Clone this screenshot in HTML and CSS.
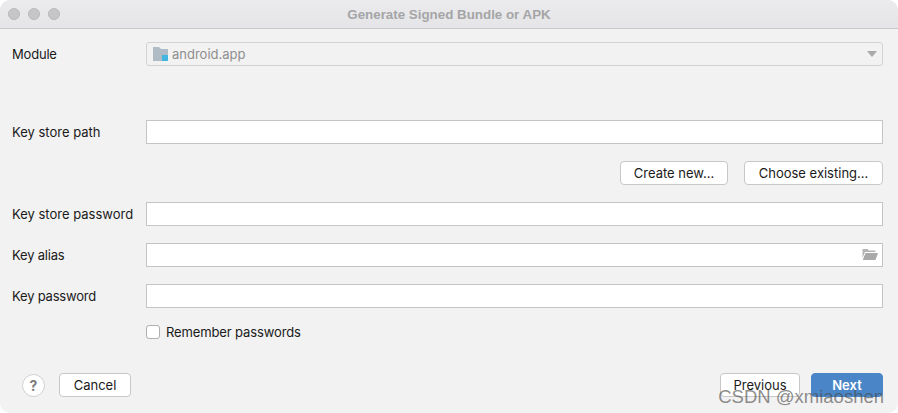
FILE: index.html
```html
<!DOCTYPE html>
<html lang="en">
<head>
<meta charset="utf-8">
<title>Generate Signed Bundle or APK</title>
<link rel="stylesheet" href="styles.css">
</head>
<body>
<div class="window">
  <header class="titlebar">
    <div class="lights"><span class="light"></span><span class="light"></span><span class="light"></span></div>
    <div class="title">Generate Signed Bundle or APK</div>
  </header>
  <main class="form">
    <div class="row row-module">
      <label class="label label-tight">Module</label>
      <div class="field field-select">
        <svg class="module-icon" width="16" height="16" viewBox="0 0 16 16"><path d="M0 1h6l2 2h7v6H9v6H0z" fill="#afbcc5"/><rect x="9" y="9" width="6" height="6" fill="#40b6e0"/></svg>
        <span class="select-text">android.app</span>
        <svg class="caret" width="10" height="6" viewBox="0 0 10 6"><path d="M0 0h10L5 6z" fill="#a9a9a9"/></svg>
      </div>
    </div>
    <div class="row row-path">
      <label class="label">Key store path</label>
      <div class="field"></div>
    </div>
    <div class="keystore-actions">
      <button class="btn btn-create">Create new...</button>
      <button class="btn btn-choose">Choose existing...</button>
    </div>
    <div class="row row-pass">
      <label class="label">Key store password</label>
      <div class="field"></div>
    </div>
    <div class="row row-gap">
      <label class="label label-tight">Key alias</label>
      <div class="field field-alias">
        <svg class="folder-icon" width="16" height="14" viewBox="0 0 16 14"><path d="M0.5 1h5l1.5 1.5h6.5V4H3L0.5 10z" fill="#b4b4b4"/><path d="M3.5 5H16l-2.5 7H0.8z" fill="#a9a9a9"/></svg>
      </div>
    </div>
    <div class="row row-gap">
      <label class="label label-tight">Key password</label>
      <div class="field"></div>
    </div>
    <div class="remember">
      <span class="checkbox"></span>
      <span class="remember-text">Remember passwords</span>
    </div>
  </main>
  <footer class="footer">
    <div class="footer-left">
      <span class="help">?</span>
      <button class="btn btn-cancel">Cancel</button>
    </div>
    <div class="footer-right">
      <button class="btn btn-prev">Previous</button>
      <button class="btn btn-next">Next</button>
    </div>
  </footer>
  <div class="watermark">CSDN @xmiaoshen</div>
</div>
</body>
</html>
```
FILE: styles.css
```css
* { box-sizing: border-box; }
html, body { margin: 0; padding: 0; background: #fff; }
body { width: 898px; height: 413px; overflow: hidden; font-family: Inter, "Liberation Sans", sans-serif; font-size: 13px; color: #1a1a1a; }
.window { position: relative; width: 898px; height: 413px; background: #f2f2f2; border-radius: 10px; overflow: hidden; display: flex; flex-direction: column; }
.titlebar { position: relative; height: 29px; flex: none; background: linear-gradient(#ebebed, #e5e5e7); border-bottom: 1px solid #c9c9c9; display: flex; align-items: center; justify-content: center; }
.lights { position: absolute; left: 8px; top: 8px; display: flex; gap: 8px; }
.light { width: 12px; height: 12px; border-radius: 50%; background: #c6c6c8; border: 1px solid #b8b8ba; }
.title { font-family: "Liberation Sans", Arial, sans-serif; font-weight: 700; font-size: 13.35px; color: #a5a5a7; }
.form { flex: none; padding: 13px 15px 0 12px; }
.row { display: flex; align-items: center; height: 24px; }
.label { width: 134px; flex: none; line-height: 24px; }
.label-tight { letter-spacing: -0.2px; }
.field { flex: 1; height: 24px; background: #fff; border: 1px solid #c4c4c4; display: flex; align-items: center; }
.field-select { background: #f2f2f2; border-color: #d2d2d2; border-radius: 3px; padding: 0 5px 0 6px; }
.module-icon { flex: none; }
.select-text { margin-left: 3px; color: #8e8e8e; }
.caret { margin-left: auto; }
.row-path { margin-top: 54px; }
.keystore-actions { display: flex; justify-content: flex-end; gap: 16px; margin-top: 17px; }
.btn { height: 24px; font: inherit; color: #1a1a1a; background: #fff; border: 1px solid #c8c8c8; border-radius: 4px; padding: 0; display: block; }
.btn-create { width: 108px; }
.btn-choose { width: 139px; }
.row-pass { margin-top: 17px; }
.row-gap { margin-top: 17px; }
.field-alias { justify-content: flex-end; padding-right: 4px; }
.remember { display: flex; align-items: center; margin-top: 17px; margin-left: 134px; height: 14px; }
.checkbox { width: 14px; height: 14px; background: #fff; border: 1px solid #b0b0b0; border-radius: 3px; flex: none; }
.remember-text { margin-left: 6px; letter-spacing: -0.12px; }
.footer { flex: none; margin-top: 34px; padding: 0 15px 0 22px; display: flex; justify-content: space-between; align-items: center; height: 24px; }
.footer-left, .footer-right { display: flex; align-items: center; }
.help { width: 23px; height: 23px; border-radius: 50%; background: #fff; border: 1px solid #cfcfcf; color: #7a7a7a; font-weight: 700; font-size: 14px; display: flex; align-items: center; justify-content: center; }
.btn-cancel { width: 72px; margin-left: 14px; }
.btn-prev { width: 80px; }
.btn-next { width: 72px; margin-left: 11px; background: #4a86c7; border-color: #4a86c7; color: #fff; font-weight: 600; }
.watermark { position: absolute; right: 14px; top: 387px; font-family: "Liberation Sans", Arial, sans-serif; font-size: 18.5px; line-height: 20px; color: rgba(70,70,70,0.62); }
```
